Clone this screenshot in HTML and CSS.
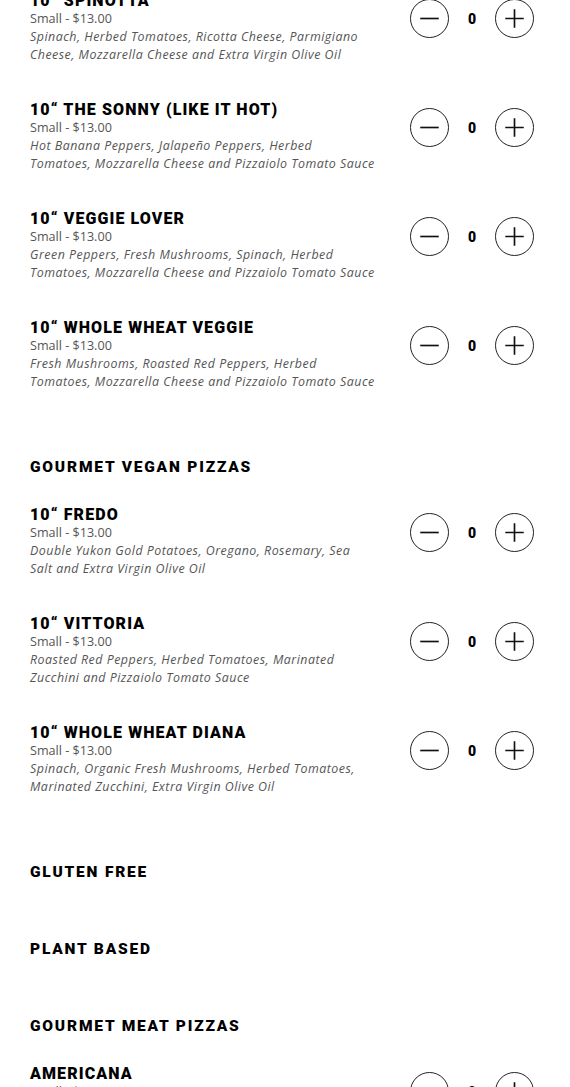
FILE: index.html
```html
<!DOCTYPE html>
<html lang="en">
<head>
    <meta charset="UTF-8">
    <meta name="viewport" content="width=device-width, initial-scale=1.0">
    <title>Menu</title>
    <link rel="stylesheet" href="styles.css">
</head>
<body>
    <div class="menu">
        <div class="category first">
            <div class="item_list">
                <div class="item">
                    <div class="info">
                        <div class="name">10“ SPINOTTA</div>
                        <div class="size">Small - $13.00</div>
                        <div class="desc">Spinach, Herbed Tomatoes, Ricotta Cheese, Parmigiano Cheese, Mozzarella Cheese and Extra Virgin Olive Oil</div>
                    </div>
                    <div class="qty">
                        <button class="round"><svg viewBox="0 0 40 40"><path d="M10 20h20"/></svg></button>
                        <span class="count">0</span>
                        <button class="round"><svg viewBox="0 0 40 40"><path d="M10 20h20M20 10v20"/></svg></button>
                    </div>
                </div>
                <div class="item">
                    <div class="info">
                        <div class="name">10“ THE SONNY (LIKE IT HOT)</div>
                        <div class="size">Small - $13.00</div>
                        <div class="desc">Hot Banana Peppers, Jalapeño Peppers, Herbed Tomatoes, Mozzarella Cheese and Pizzaiolo Tomato Sauce</div>
                    </div>
                    <div class="qty">
                        <button class="round"><svg viewBox="0 0 40 40"><path d="M10 20h20"/></svg></button>
                        <span class="count">0</span>
                        <button class="round"><svg viewBox="0 0 40 40"><path d="M10 20h20M20 10v20"/></svg></button>
                    </div>
                </div>
                <div class="item">
                    <div class="info">
                        <div class="name">10“ VEGGIE LOVER</div>
                        <div class="size">Small - $13.00</div>
                        <div class="desc">Green Peppers, Fresh Mushrooms, Spinach, Herbed Tomatoes, Mozzarella Cheese and Pizzaiolo Tomato Sauce</div>
                    </div>
                    <div class="qty">
                        <button class="round"><svg viewBox="0 0 40 40"><path d="M10 20h20"/></svg></button>
                        <span class="count">0</span>
                        <button class="round"><svg viewBox="0 0 40 40"><path d="M10 20h20M20 10v20"/></svg></button>
                    </div>
                </div>
                <div class="item">
                    <div class="info">
                        <div class="name">10“ WHOLE WHEAT VEGGIE</div>
                        <div class="size">Small - $13.00</div>
                        <div class="desc">Fresh Mushrooms, Roasted Red Peppers, Herbed Tomatoes, Mozzarella Cheese and Pizzaiolo Tomato Sauce</div>
                    </div>
                    <div class="qty">
                        <button class="round"><svg viewBox="0 0 40 40"><path d="M10 20h20"/></svg></button>
                        <span class="count">0</span>
                        <button class="round"><svg viewBox="0 0 40 40"><path d="M10 20h20M20 10v20"/></svg></button>
                    </div>
                </div>
            </div>
        </div>

        <div class="category">
            <h2 class="category_title">GOURMET VEGAN PIZZAS</h2>
            <div class="item_list">
                <div class="item">
                    <div class="info">
                        <div class="name">10“ FREDO</div>
                        <div class="size">Small - $13.00</div>
                        <div class="desc">Double Yukon Gold Potatoes, Oregano, Rosemary, Sea Salt and Extra Virgin Olive Oil</div>
                    </div>
                    <div class="qty">
                        <button class="round"><svg viewBox="0 0 40 40"><path d="M10 20h20"/></svg></button>
                        <span class="count">0</span>
                        <button class="round"><svg viewBox="0 0 40 40"><path d="M10 20h20M20 10v20"/></svg></button>
                    </div>
                </div>
                <div class="item">
                    <div class="info">
                        <div class="name">10“ VITTORIA</div>
                        <div class="size">Small - $13.00</div>
                        <div class="desc">Roasted Red Peppers, Herbed Tomatoes, Marinated Zucchini and Pizzaiolo Tomato Sauce</div>
                    </div>
                    <div class="qty">
                        <button class="round"><svg viewBox="0 0 40 40"><path d="M10 20h20"/></svg></button>
                        <span class="count">0</span>
                        <button class="round"><svg viewBox="0 0 40 40"><path d="M10 20h20M20 10v20"/></svg></button>
                    </div>
                </div>
                <div class="item">
                    <div class="info">
                        <div class="name">10“ WHOLE WHEAT DIANA</div>
                        <div class="size">Small - $13.00</div>
                        <div class="desc">Spinach, Organic Fresh Mushrooms, Herbed Tomatoes, Marinated Zucchini, Extra Virgin Olive Oil</div>
                    </div>
                    <div class="qty">
                        <button class="round"><svg viewBox="0 0 40 40"><path d="M10 20h20"/></svg></button>
                        <span class="count">0</span>
                        <button class="round"><svg viewBox="0 0 40 40"><path d="M10 20h20M20 10v20"/></svg></button>
                    </div>
                </div>
            </div>
        </div>

        <div class="category">
            <h2 class="category_title">GLUTEN FREE</h2>
        </div>

        <div class="category">
            <h2 class="category_title">PLANT BASED</h2>
        </div>

        <div class="category">
            <h2 class="category_title">GOURMET MEAT PIZZAS</h2>
            <div class="item_list">
                <div class="item">
                    <div class="info">
                        <div class="name">AMERICANA</div>
                        <div class="size">Small - $13.00</div>
                        <div class="desc">Mozzarella Cheese, Pepperoni and Pizzaiolo Tomato Sauce</div>
                    </div>
                    <div class="qty">
                        <button class="round"><svg viewBox="0 0 40 40"><path d="M10 20h20"/></svg></button>
                        <span class="count">0</span>
                        <button class="round"><svg viewBox="0 0 40 40"><path d="M10 20h20M20 10v20"/></svg></button>
                    </div>
                </div>
            </div>
        </div>
    </div>
</body>
</html>
```

FILE: styles.css
```css
body {
    margin: 0;
    background: #fff;
    color: #000;
    font-family: "Open Sans", "Liberation Sans", sans-serif;
}
.menu {
    padding: 0 36px 0 30px;
}
.category {
    margin-bottom: 57px;
}
.category.first {
    margin-top: -9px;
    margin-bottom: 66px;
}
.category_title {
    margin: 0;
    font-family: Roboto, "Liberation Sans", sans-serif;
    font-weight: 900;
    font-size: 15.5px;
    line-height: 20px;
    letter-spacing: 1.8px;
}
.category_title + .item_list {
    margin-top: 28px;
    padding-bottom: 9px;
}
.item_list {
    display: flex;
    flex-direction: column;
    gap: 36px;
}
.item {
    display: flex;
    justify-content: space-between;
    align-items: flex-start;
}
.info {
    width: 345px;
}
.name {
    font-family: Roboto, "Liberation Sans", sans-serif;
    font-weight: 900;
    font-size: 16px;
    line-height: 19px;
    letter-spacing: 1.1px;
}
.size {
    font-size: 12.6px;
    line-height: 18px;
    color: #555;
}
.desc {
    font-size: 12.4px;
    line-height: 18px;
    letter-spacing: 0.5px;
    font-style: italic;
    color: #555;
}
.qty {
    display: flex;
    align-items: center;
    margin-top: 8px;
}
.round {
    width: 39px;
    height: 39px;
    padding: 0;
    border: 1px solid #222;
    border-radius: 50%;
    background: #fff;
    cursor: pointer;
}
.round svg {
    display: block;
    width: 37px;
    height: 37px;
    stroke: #111;
    stroke-width: 1.8;
    fill: none;
}
.count {
    width: 46px;
    text-align: center;
    font-family: Roboto, "Liberation Sans", sans-serif;
    font-weight: 900;
    font-size: 14px;
}
```
